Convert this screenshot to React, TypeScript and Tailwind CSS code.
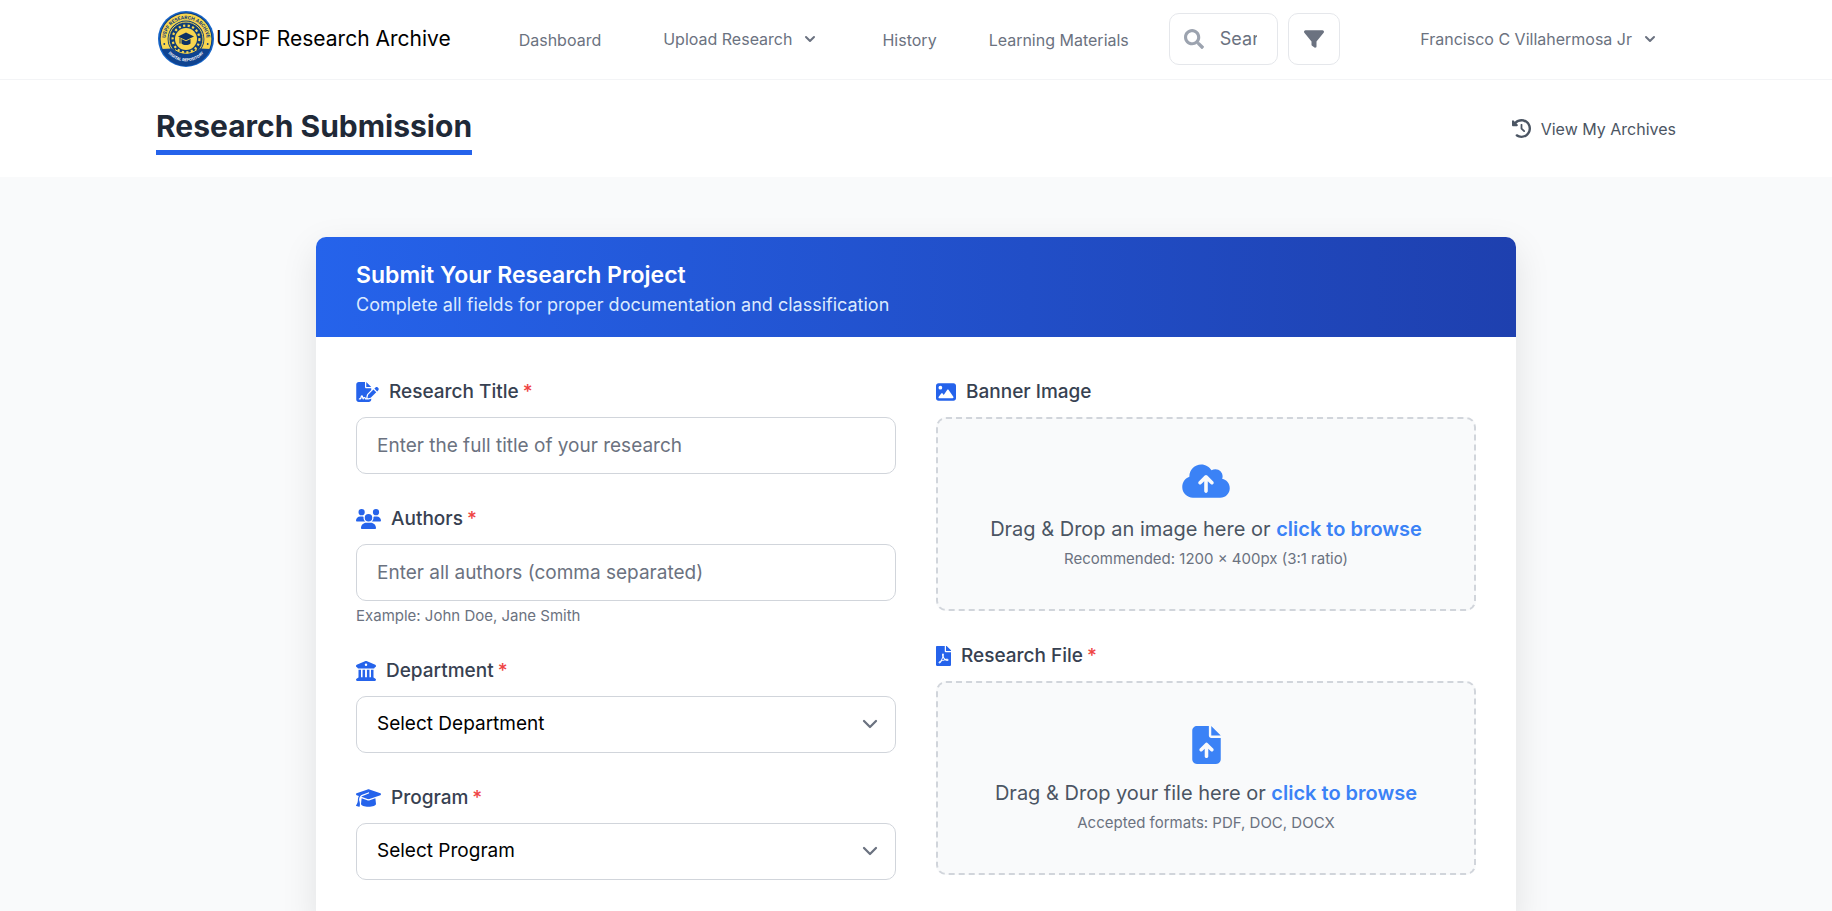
import type { ReactNode } from "react";
import type { IconType } from "react-icons";
import {
  FaBuildingColumns,
  FaClockRotateLeft,
  FaCloudArrowUp,
  FaFileArrowUp,
  FaFileSignature,
  FaFilter,
  FaGraduationCap,
  FaImage,
  FaUsers,
} from "react-icons/fa6";
import { FaFilePdf, FaSearch } from "react-icons/fa";

function Seal() {
  return (
    <svg viewBox="0 0 56 56" className="size-14 shrink-0" role="img" aria-label="USPF seal">
      <defs>
        <path id="seal-top" d="M8.2 34.5 A20.6 20.6 0 1 1 47.8 34.5" />
        <path id="seal-bottom" d="M9.5 41.5 A24 24 0 0 0 46.5 41.5" />
      </defs>
      <circle cx="28" cy="28" r="28" fill="#1765c8" />
      <circle cx="28" cy="28" r="26.4" fill="#0d3a78" />
      <circle cx="28" cy="28" r="25.4" fill="#f8d64e" />
      <circle cx="28" cy="28" r="18.4" fill="#0f3d78" />
      <circle cx="28" cy="28" r="17" fill="none" stroke="#f8d64e" strokeWidth="1" />
      <circle cx="28" cy="28" r="13.4" fill="none" stroke="#f8d64e" strokeWidth="2.2" strokeDasharray="2.2 2.4" />
      <circle cx="28" cy="28" r="11" fill="#f8d64e" />
      <path d="M28 21.5 36 25.4 28 29.2 20 25.4Z" fill="#0c3265" />
      <path d="M23.5 28v4.4c2.6 2 6.4 2 9 0V28L28 30.3Z" fill="#0c3265" />
      <path d="M22 26.5v6" stroke="#0c3265" strokeWidth="1" />
      <path d="M3.5 38 14 37.5c7 7.5 21 7.5 28 0l10.5 0.5C48 49 38 55 28 55S8 49 3.5 38Z" fill="#0f4390" />
      <path d="M17 38.5c6 5 16 5 22 0" fill="none" stroke="#f8d64e" strokeWidth="1" />
      <circle cx="6.3" cy="33" r="0.9" fill="#0d3a78" />
      <circle cx="49.7" cy="33" r="0.9" fill="#0d3a78" />
      <text fontFamily="Roboto, sans-serif" fontSize="5" fontWeight="700" fill="#0d3a78" textAnchor="middle">
        <textPath href="#seal-top" startOffset="50%">USPF RESEARCH ARCHIVE</textPath>
      </text>
      <text fontFamily="Roboto, sans-serif" fontSize="4" fontWeight="700" fill="#ffffff" textAnchor="middle">
        <textPath href="#seal-bottom" startOffset="50%">DIGITAL REPOSITORY</textPath>
      </text>
    </svg>
  );
}

function Caret() {
  return (
    <svg viewBox="0 0 20 20" className="size-5" fill="currentColor" aria-hidden="true">
      <path
        fillRule="evenodd"
        clipRule="evenodd"
        d="M5.293 7.293a1 1 0 011.414 0L10 10.586l3.293-3.293a1 1 0 111.414 1.414l-4 4a1 1 0 01-1.414 0l-4-4a1 1 0 010-1.414z"
      />
    </svg>
  );
}

function Field({
  id,
  icon: Icon,
  iconWidth = "w-5",
  label,
  required,
  hint,
  children,
}: {
  id: string;
  icon: IconType;
  iconWidth?: string;
  label: string;
  required?: boolean;
  hint?: string;
  children: ReactNode;
}) {
  return (
    <div>
      <label htmlFor={id} className="mb-2.5 flex h-[30px] items-center text-[19px] font-medium text-[#374151]">
        <Icon className={`mr-2.5 h-5 text-[#2563eb] ${iconWidth}`} aria-hidden="true" />
        {label}
        {required && <span className="ml-1 text-[#ef4444]">*</span>}
      </label>
      {children}
      {hint && <p className="mt-1 text-[15px] leading-[21px] text-[#6b7280]">{hint}</p>}
    </div>
  );
}

const control =
  "h-[57px] w-full rounded-[10px] border border-[#d1d5db] bg-white px-5 text-[19px] placeholder:text-[#6b7280]";

function SelectBox({ id, placeholder }: { id: string; placeholder: string }) {
  return (
    <div className="relative">
      <select id={id} className={`${control} appearance-none text-black`}>
        <option>{placeholder}</option>
      </select>
      <svg
        viewBox="0 0 20 20"
        className="pointer-events-none absolute top-4 right-3.5 size-6 text-[#6b7280]"
        fill="none"
        stroke="currentColor"
        strokeWidth="1.9"
        strokeLinecap="round"
        strokeLinejoin="round"
        aria-hidden="true"
      >
        <path d="M5 7.5l5 5 5-5" />
      </svg>
    </div>
  );
}

function DropZone({
  id,
  icon: Icon,
  iconWidth,
  text,
  note,
}: {
  id: string;
  icon: IconType;
  iconWidth: string;
  text: string;
  note: string;
}) {
  return (
    <div className="flex h-[194px] flex-col items-center rounded-[10px] border-2 border-dashed border-[#d1d5db] bg-[#f9fafb] pt-[43px]">
      <Icon className={`h-[38px] text-[#3b82f6] ${iconWidth}`} aria-hidden="true" />
      <p className="mt-3.5 text-xl leading-[30px] text-[#4b5563]">
        {text}{" "}
        <button type="button" className="font-semibold text-[#3b82f6]">
          click to browse
        </button>
      </p>
      <p className="mt-[3px] text-[15px] leading-6 text-[#6b7280]">{note}</p>
      <input id={id} type="file" className="sr-only" />
    </div>
  );
}

export default function App() {
  return (
    <div className="min-h-screen overflow-hidden bg-[#f9fafb] font-['Inter',sans-serif]">
      <nav className="border-b border-[#f3f4f6] bg-white">
        <div className="mx-auto flex h-[79px] max-w-[1520px] items-center pb-px text-base text-[#6b7280]">
          <a href="#" className="ml-0.5 flex items-center gap-0.5 text-[21px] text-black">
            <Seal />
            USPF Research Archive
          </a>
          <a href="#" className="ml-[68px] pt-0.5">Dashboard</a>
          <button type="button" className="ml-[62px] flex items-center gap-2">
            Upload Research <Caret />
          </button>
          <a href="#" className="ml-[62px] pt-0.5">History</a>
          <a href="#" className="ml-[52px] pt-0.5">Learning Materials</a>
          <div className="ml-10 flex h-[52px] w-[109px] items-center gap-4 rounded-[10px] border border-[#e5e7eb] pr-5 pl-3.5">
            <FaSearch className="size-5 shrink-0 text-[#9ca3af]" aria-hidden="true" />
            <input
              aria-label="Search"
              placeholder="Search..."
              className="w-full min-w-0 text-lg outline-none placeholder:text-[#6b7280]"
            />
          </div>
          <button
            type="button"
            aria-label="Filter"
            className="ml-2.5 flex size-[52px] items-center justify-center rounded-[10px] border border-[#e5e7eb]"
          >
            <FaFilter className="size-5" />
          </button>
          <button type="button" className="mr-4 ml-auto flex items-center gap-2">
            Francisco C Villahermosa Jr <Caret />
          </button>
        </div>
      </nav>

      <header className="bg-white">
        <div className="mx-auto flex h-[97px] max-w-[1520px] items-center justify-between">
          <h1 className="mt-1 border-b-5 border-[#2563eb] pb-1 text-[30px] leading-10 font-bold text-[#1f2937]">
            Research Submission
          </h1>
          <a href="#" className="flex items-center gap-2.5 text-base text-[#4b5563]">
            <FaClockRotateLeft className="size-[19px]" aria-hidden="true" />
            View My Archives
          </a>
        </div>
      </header>

      <main className="mx-auto mt-[60px] max-w-[1200px] overflow-hidden rounded-t-[10px] bg-white shadow-[0_12px_36px_rgba(0,0,0,0.1)]">
        <div className="bg-linear-to-r from-[#2563eb] to-[#1e40af] px-10 py-5">
          <h2 className="text-[23px] leading-9 font-semibold text-white">Submit Your Research Project</h2>
          <p className="text-lg leading-6 text-[#dbeafe]">Complete all fields for proper documentation and classification</p>
        </div>
        <form className="grid grid-cols-2 gap-10 p-10">
          <div className="flex flex-col gap-[30px]">
            <Field id="title" icon={FaFileSignature} iconWidth="w-[23px]" label="Research Title" required>
              <input id="title" className={control} placeholder="Enter the full title of your research" />
            </Field>
            <Field id="authors" icon={FaUsers} iconWidth="w-[25px]" label="Authors" required hint="Example: John Doe, Jane Smith">
              <input id="authors" className={control} placeholder="Enter all authors (comma separated)" />
            </Field>
            <Field id="department" icon={FaBuildingColumns} label="Department" required>
              <SelectBox id="department" placeholder="Select Department" />
            </Field>
            <Field id="program" icon={FaGraduationCap} iconWidth="w-[25px]" label="Program" required>
              <SelectBox id="program" placeholder="Select Program" />
            </Field>
          </div>
          <div className="flex flex-col gap-[30px]">
            <Field id="banner" icon={FaImage} label="Banner Image">
              <DropZone
                id="banner"
                icon={FaCloudArrowUp}
                iconWidth="w-12"
                text="Drag & Drop an image here or"
                note="Recommended: 1200 × 400px (3:1 ratio)"
              />
            </Field>
            <Field id="file" icon={FaFilePdf} iconWidth="w-[15px]" label="Research File" required>
              <DropZone
                id="file"
                icon={FaFileArrowUp}
                iconWidth="w-[29px]"
                text="Drag & Drop your file here or"
                note="Accepted formats: PDF, DOC, DOCX"
              />
            </Field>
          </div>
        </form>
      </main>
    </div>
  );
}
